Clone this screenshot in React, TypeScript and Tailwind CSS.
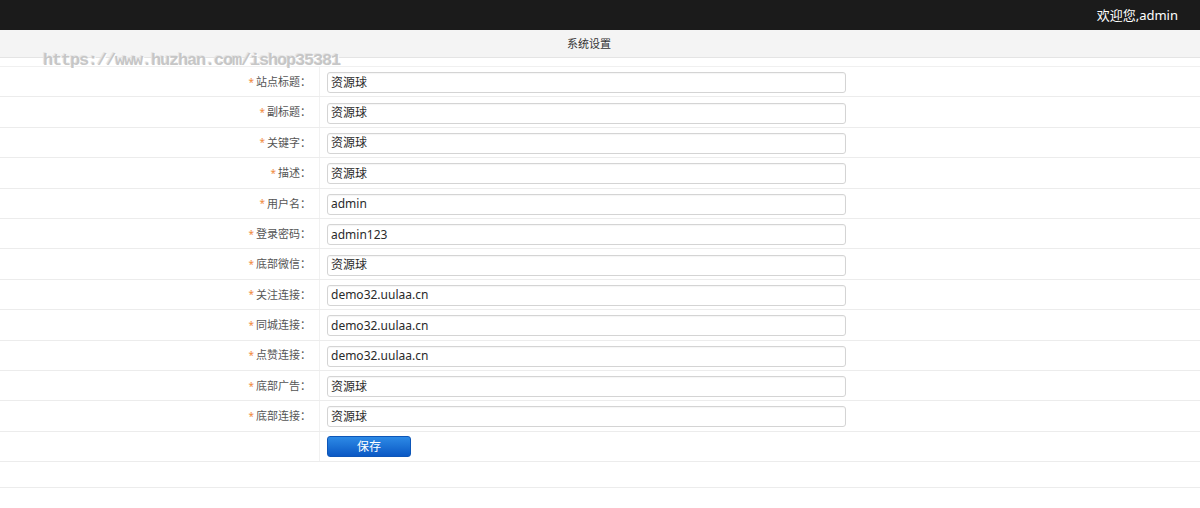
import React from "react";

const fields: { label: string; value: string }[] = [
  { label: "站点标题", value: "资源球" },
  { label: "副标题", value: "资源球" },
  { label: "关键字", value: "资源球" },
  { label: "描述", value: "资源球" },
  { label: "用户名", value: "admin" },
  { label: "登录密码", value: "admin123" },
  { label: "底部微信", value: "资源球" },
  { label: "关注连接", value: "demo32.uulaa.cn" },
  { label: "同城连接", value: "demo32.uulaa.cn" },
  { label: "点赞连接", value: "demo32.uulaa.cn" },
  { label: "底部广告", value: "资源球" },
  { label: "底部连接", value: "资源球" },
];

const sans = "font-['Noto_Sans','Noto_Sans_CJK_SC',sans-serif]";

export default function App() {
  return (
    <div className={`relative w-[1200px] h-[508px] bg-white overflow-hidden ${sans}`}>
      {/* top bar */}
      <div className="h-[30px] bg-[#1b1b1b] flex items-center justify-end pr-[22px]">
        <span className="text-white text-[13px] leading-none">欢迎您,admin</span>
      </div>

      {/* page title */}
      <div className="h-[28px] bg-[#f4f4f4] border-b border-[#e4e4e4] flex items-center justify-center pr-[22px]">
        <span className="text-[11px] text-[#333] leading-none">系统设置</span>
      </div>

      <div className="h-[9px] border-b border-[#f0f0f0]" />

      {/* settings form */}
      <div className="flex flex-col">
        {fields.map((f) => (
          <div key={f.label} className="h-[30.4px] border-b border-[#ececec] flex">
            <div className="w-[320px] border-r border-[#f1f1f1] flex items-center justify-end pr-[8px] pt-[1px] text-[11px] text-[#555]">
              <span className="text-[#f08a3c] text-[10px] mr-[2px]">*</span>
              <span>{f.label}：</span>
            </div>
            <div className="flex-1 flex items-center pl-[7px] pt-[2px]">
              <div className="w-[519px] h-[21px] border border-[#d4d4d4] rounded-[3px] flex items-center pl-[3px] text-[12px] text-[#2a2a2a] shadow-[inset_0_1px_1px_rgba(0,0,0,0.04)]">
                {f.value}
              </div>
            </div>
          </div>
        ))}
        <div className="h-[30.4px] border-b border-[#ececec] flex">
          <div className="w-[320px] border-r border-[#f1f1f1]" />
          <div className="flex-1 flex items-center pl-[7px] pt-[1px]">
            <div className="w-[84px] h-[21px] rounded-[3px] bg-gradient-to-b from-[#2d8ae6] to-[#0b58c4] border border-[#0d56b8] flex items-center justify-center text-white text-[12px]">
              保存
            </div>
          </div>
        </div>
        <div className="h-[26px] border-b border-[#ececec]" />
      </div>

      {/* watermark */}
      <div className="absolute left-[43px] top-[52px] text-[17px] leading-none font-bold tracking-[-1.2px] font-['Liberation_Mono',monospace] text-[#c6c6c6] [text-shadow:1px_1px_0_#ffffff,-1px_-1px_0_#e6e6e6]">
        https://www.huzhan.com/ishop35381
      </div>
    </div>
  );
}
